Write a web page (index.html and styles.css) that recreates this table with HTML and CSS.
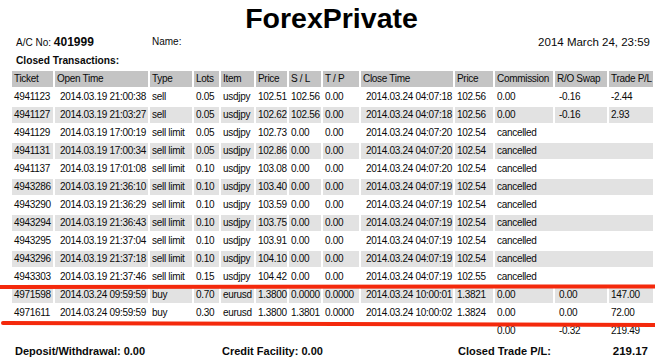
FILE: index.html
```html
<!DOCTYPE html>
<html>
<head>
<meta charset="utf-8">
<title>ForexPrivate - Closed Transactions</title>
<link rel="stylesheet" href="styles.css">
</head>
<body>
<div class="page">
  <h1 class="title">ForexPrivate</h1>
  <div class="info">
    <div class="acc">A/C No: <b class="accno">401999</b></div>
    <div class="name">Name:</div>
    <div class="date">2014 March 24, 23:59</div>
  </div>
  <div class="section">Closed Transactions:</div>
  <table class="trades">
    <colgroup>
      <col class="w-ticket"><col class="w-open"><col class="w-type"><col class="w-lots"><col class="w-item"><col class="w-price"><col class="w-sl"><col class="w-tp"><col class="w-close"><col class="w-price2"><col class="w-comm"><col class="w-swap"><col class="w-pl">
    </colgroup>
    <thead>
      <tr><th>Ticket</th><th>Open Time</th><th>Type</th><th>Lots</th><th>Item</th><th>Price</th><th>S / L</th><th>T / P</th><th>Close Time</th><th>Price</th><th>Commission</th><th>R/O Swap</th><th>Trade P/L</th></tr>
    </thead>
    <tbody>
      <tr><td>4941123</td><td class="dt">2014.03.19 21:00:38</td><td>sell</td><td>0.05</td><td>usdjpy</td><td>102.51</td><td>102.56</td><td>0.00</td><td class="dt">2014.03.24 04:07:18</td><td>102.56</td><td>0.00</td><td class="sw">-0.16</td><td>-2.44</td></tr>
      <tr><td>4941127</td><td class="dt">2014.03.19 21:03:27</td><td>sell</td><td>0.05</td><td>usdjpy</td><td>102.62</td><td>102.56</td><td>0.00</td><td class="dt">2014.03.24 04:07:18</td><td>102.56</td><td>0.00</td><td class="sw">-0.16</td><td>2.93</td></tr>
      <tr><td>4941129</td><td class="dt">2014.03.19 17:00:19</td><td>sell limit</td><td>0.05</td><td>usdjpy</td><td>102.73</td><td>0.00</td><td>0.00</td><td class="dt">2014.03.24 04:07:20</td><td>102.54</td><td colspan="3">cancelled</td></tr>
      <tr><td>4941131</td><td class="dt">2014.03.19 17:00:34</td><td>sell limit</td><td>0.05</td><td>usdjpy</td><td>102.86</td><td>0.00</td><td>0.00</td><td class="dt">2014.03.24 04:07:20</td><td>102.54</td><td colspan="3">cancelled</td></tr>
      <tr><td>4941137</td><td class="dt">2014.03.19 17:01:08</td><td>sell limit</td><td>0.10</td><td>usdjpy</td><td>103.08</td><td>0.00</td><td>0.00</td><td class="dt">2014.03.24 04:07:20</td><td>102.54</td><td colspan="3">cancelled</td></tr>
      <tr><td>4943286</td><td class="dt">2014.03.19 21:36:10</td><td>sell limit</td><td>0.10</td><td>usdjpy</td><td>103.40</td><td>0.00</td><td>0.00</td><td class="dt">2014.03.24 04:07:19</td><td>102.54</td><td colspan="3">cancelled</td></tr>
      <tr><td>4943290</td><td class="dt">2014.03.19 21:36:29</td><td>sell limit</td><td>0.10</td><td>usdjpy</td><td>103.59</td><td>0.00</td><td>0.00</td><td class="dt">2014.03.24 04:07:19</td><td>102.54</td><td colspan="3">cancelled</td></tr>
      <tr><td>4943294</td><td class="dt">2014.03.19 21:36:43</td><td>sell limit</td><td>0.10</td><td>usdjpy</td><td>103.75</td><td>0.00</td><td>0.00</td><td class="dt">2014.03.24 04:07:19</td><td>102.54</td><td colspan="3">cancelled</td></tr>
      <tr><td>4943295</td><td class="dt">2014.03.19 21:37:04</td><td>sell limit</td><td>0.10</td><td>usdjpy</td><td>103.91</td><td>0.00</td><td>0.00</td><td class="dt">2014.03.24 04:07:19</td><td>102.54</td><td colspan="3">cancelled</td></tr>
      <tr><td>4943296</td><td class="dt">2014.03.19 21:37:18</td><td>sell limit</td><td>0.10</td><td>usdjpy</td><td>104.10</td><td>0.00</td><td>0.00</td><td class="dt">2014.03.24 04:07:19</td><td>102.54</td><td colspan="3">cancelled</td></tr>
      <tr><td>4943303</td><td class="dt">2014.03.19 21:37:46</td><td>sell limit</td><td>0.15</td><td>usdjpy</td><td>104.42</td><td>0.00</td><td>0.00</td><td class="dt">2014.03.24 04:07:19</td><td>102.55</td><td colspan="3">cancelled</td></tr>
      <tr><td>4971598</td><td class="dt">2014.03.24 09:59:59</td><td>buy</td><td>0.70</td><td>eurusd</td><td>1.3800</td><td>0.0000</td><td>0.0000</td><td class="dt">2014.03.24 10:00:01</td><td>1.3821</td><td>0.00</td><td class="sw">0.00</td><td>147.00</td></tr>
      <tr><td>4971611</td><td class="dt">2014.03.24 09:59:59</td><td>buy</td><td>0.30</td><td>eurusd</td><td>1.3800</td><td>1.3801</td><td>0.0000</td><td class="dt">2014.03.24 10:00:02</td><td>1.3824</td><td>0.00</td><td class="sw">0.00</td><td>72.00</td></tr>
      <tr class="totals"><td colspan="10"></td><td>0.00</td><td class="sw">-0.32</td><td>219.49</td></tr>
    </tbody>
  </table>
  <div class="summary">
    <div class="sum-dep">Deposit/Withdrawal: 0.00</div>
    <div class="sum-credit">Credit Facility: 0.00</div>
    <div class="sum-label">Closed Trade P/L:</div>
    <div class="sum-value">219.17</div>
  </div>
  <svg class="marks" width="655" height="359" viewBox="0 0 655 359">
    <path d="M0 285 L655 284.5" stroke="#f4290c" stroke-width="4" stroke-linecap="round" fill="none"/>
    <path d="M3 321 L655 323" stroke="#f4290c" stroke-width="4" stroke-linecap="round" fill="none"/>
  </svg>
</div>
</body>
</html>
```

FILE: styles.css
```css
* { box-sizing: border-box; }
html, body { margin: 0; padding: 0; background: #fff; }
body {
  width: 655px;
  height: 359px;
  overflow: hidden;
  color: #0a0a0a;
  font-family: "Liberation Sans", Arial, sans-serif;
  font-size: 10px;
}
.page { position: relative; width: 655px; height: 359px; }

.title {
  margin: 2px 0 0 0;
  height: 32px;
  line-height: 32px;
  text-align: center;
  padding-left: 8px;
  font-weight: bold;
  font-size: 28.5px;
  color: #000;
}

.info {
  display: flex;
  align-items: center;
  height: 16px;
  line-height: 16px;
  padding: 0 5px 0 16px;
  font-size: 10px;
}
.acc { width: 136px; }
.accno { font-size: 12px; font-weight: bold; }
.name { flex: 1; }
.date { font-size: 11.5px; }

.section {
  margin-top: 3px;
  padding-left: 16px;
  height: 16px;
  line-height: 16px;
  font-weight: bold;
  font-size: 10.2px;
}

.trades {
  margin: 0 0 0 10px;
  width: 645px;
  table-layout: fixed;
  border-collapse: separate;
  border-spacing: 2px;
}
.w-ticket { width: 41px; }
.w-open { width: 93px; }
.w-type { width: 42px; }
.w-lots { width: 25px; }
.w-item { width: 33px; }
.w-price { width: 31px; }
.w-sl { width: 32px; }
.w-tp { width: 36px; }
.w-close { width: 92px; }
.w-price2 { width: 38px; }
.w-comm { width: 58px; }
.w-swap { width: 52px; }
.w-pl { width: 44px; }

.trades th, .trades td {
  height: 16px;
  padding: 0 0 0 2px;
  line-height: 16px;
  text-align: left;
  font-weight: normal;
  letter-spacing: -0.3px;
  white-space: nowrap;
  overflow: visible;
}
.trades th { background: #c4c4c4; }
.trades tbody tr:nth-child(even) td { background: #e2e2e2; }
.trades td.dt { padding-left: 5px; }
.trades td.sw { padding-left: 4px; }
.trades tbody tr.totals td { background: #fff; }

.summary {
  display: grid;
  grid-template-columns: 207px 236px 1fr auto;
  align-items: center;
  height: 20px;
  padding: 0 7px 0 15px;
  font-weight: bold;
  font-size: 11px;
}
.sum-value { font-size: 11.5px; }

.marks {
  position: absolute;
  left: 0;
  top: 0;
  pointer-events: none;
}
```
